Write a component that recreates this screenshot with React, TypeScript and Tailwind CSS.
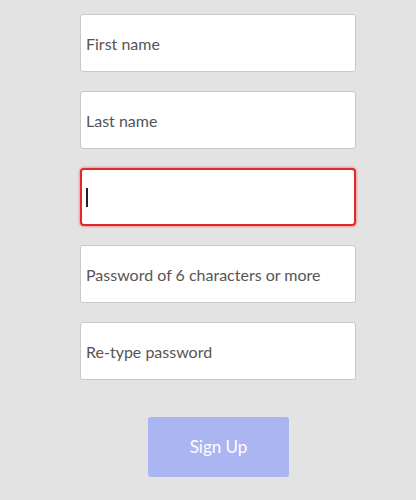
const fields = ['First name', 'Last name', '', 'Password of 6 characters or more', 'Re-type password'];

export default function App() {
  return (
    <div
      className="w-[416px] h-[500px] bg-[#e4e3e4] overflow-hidden pt-[14px]"
      style={{ fontFamily: 'Lato, "Open Sans", sans-serif' }}
    >
      <div className="ml-[80px] w-[276px] flex flex-col gap-[19px]">
        {fields.map((label, i) =>
          label ? (
            <div
              key={i}
              className="h-[58px] bg-white border border-[#c9c9c9] rounded-[3px] flex items-center pl-[5px] pt-[1px] text-[16px] text-[#555555]"
            >
              {label}
            </div>
          ) : (
            <div
              key={i}
              className="h-[58px] bg-white border-2 border-[#e02a2a] rounded-[4px] flex items-center pl-[4px] shadow-[0_0_3px_#e85a5a]"
            >
              <span className="block w-[1.5px] h-[19px] bg-[#222]" />
            </div>
          )
        )}
      </div>
      <button className="mt-[37px] ml-[148px] w-[141px] h-[60px] rounded-[3px] bg-[#aab5f1] text-white text-[17px]">
        Sign Up
      </button>
    </div>
  );
}
